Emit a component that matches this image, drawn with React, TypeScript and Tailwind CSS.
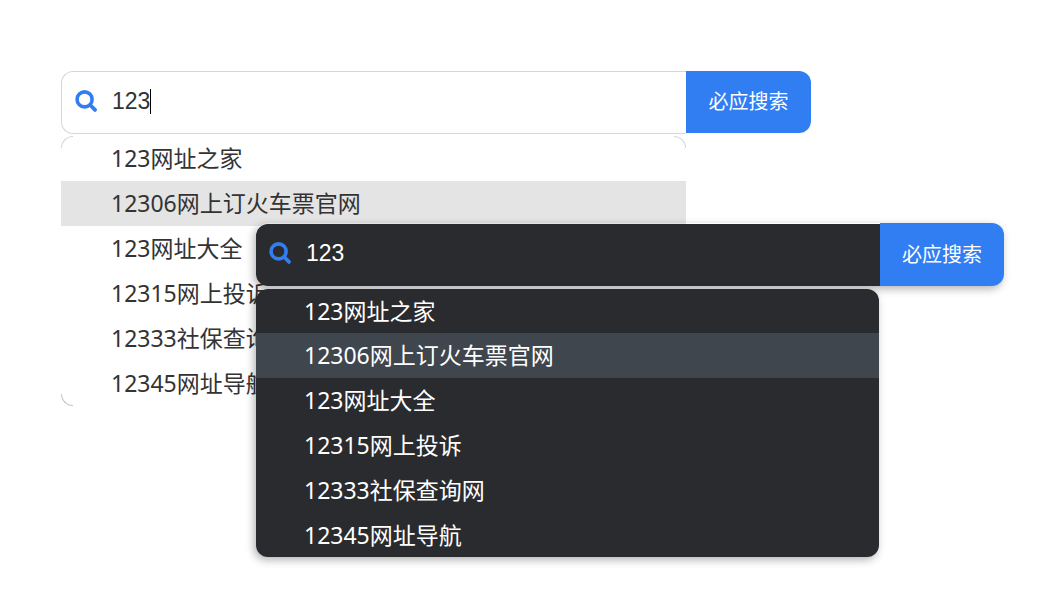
import React, { useState } from 'react';

const suggestions = [
  '123网址之家',
  '12306网上订火车票官网',
  '123网址大全',
  '12315网上投诉',
  '12333社保查询网',
  '12345网址导航',
];

const SearchIcon: React.FC = () => (
  <svg viewBox="0 0 22 22" className="w-[22px] h-[22px] shrink-0" fill="none" stroke="#317ef3" aria-hidden="true">
    <circle cx="9.6" cy="9.4" r="7.5" strokeWidth="3.6" />
    <path d="M15.2 15l4.8 4.9" strokeWidth="3.8" strokeLinecap="round" />
  </svg>
);

interface SearchBoxProps {
  id: string;
  dark?: boolean;
}

const SearchBox: React.FC<SearchBoxProps> = ({ id, dark = false }) => {
  const [query, setQuery] = useState('123');
  const [active, setActive] = useState(1);

  return (
    <form onSubmit={(e) => e.preventDefault()}>
      {/* SEARCH BAR */}
      <div className={`flex rounded-xl ${dark ? 'items-end shadow-[-2px_3px_8px_rgba(0,0,0,0.3)]' : 'items-start'}`}>
        <div
          className={`relative flex flex-1 items-center gap-[15px] rounded-l-xl pb-1 ${
            dark ? 'h-[62px] bg-[#2a2b2e] pl-[13px] text-white' : 'h-[63px] border border-r-0 border-[#d4d6da] bg-white pl-[13px] text-[#333]'
          }`}
        >
          <label htmlFor={id} aria-label="搜索">
            <SearchIcon />
          </label>
          <input
            id={id}
            type="text"
            autoComplete="off"
            value={query}
            onChange={(e) => setQuery(e.target.value)}
            className="h-10 min-w-0 flex-1 bg-transparent font-['Liberation_Sans','Noto_Sans_CJK_SC',sans-serif] text-[23px] leading-10 caret-transparent outline-none"
          />
          {!dark && <span className="absolute left-[88px] top-[17px] h-[25px] w-px bg-black" />}
        </div>
        <button
          type="submit"
          className={`shrink-0 rounded-r-xl bg-[#317ef3] text-xl text-white ${dark ? 'h-[63px] w-[124px]' : 'h-[62px] w-[125px]'}`}
        >
          必应搜索
        </button>
      </div>

      {/* SUGGESTIONS */}
      <ul
        className={`relative mr-[125px] text-[23px] ${
          dark
            ? 'mt-[3px] overflow-hidden rounded-xl bg-[#2a2b2e] text-white shadow-[-2px_3px_8px_rgba(0,0,0,0.3)]'
            : 'mt-[2px] text-[#333]'
        }`}
      >
        {!dark && (
          <>
            <li aria-hidden="true" className="absolute left-0 top-0 size-3 rounded-tl-xl border-l border-t border-[#d4d6da]" />
            <li aria-hidden="true" className="absolute right-0 top-0 size-3 rounded-tr-xl border-r border-t border-[#d4d6da]" />
            <li aria-hidden="true" className="absolute bottom-0 left-0 size-3 rounded-bl-xl border-b border-l border-[#cdbfd0]" />
          </>
        )}
        {suggestions.map((item, index) => (
          <li
            key={item}
            onMouseEnter={() => setActive(index)}
            className={`flex h-[45px] items-center whitespace-nowrap ${
              dark ? 'pl-12 first:h-11 last:h-11' : 'pl-[50px]'
            } ${index === active ? (dark ? 'bg-[#40464d]' : 'bg-[#e4e4e4]') : ''}`}
          >
            {item}
          </li>
        ))}
      </ul>
    </form>
  );
};

export default function App() {
  return (
    <main className="grid min-h-screen grid-cols-1 items-start bg-white font-['Noto_Sans','Noto_Sans_CJK_SC',sans-serif]">
      {/* both themes share one grid cell so the dark one stacks on top */}
      <div className="col-start-1 row-start-1 ml-[61px] mr-[228px] mt-[71px]">
        <SearchBox id="search-light" />
      </div>
      <div className="z-10 col-start-1 row-start-1 mb-9 ml-64 mr-[35px] mt-[223px]">
        <SearchBox id="search-dark" dark />
      </div>
    </main>
  );
}
